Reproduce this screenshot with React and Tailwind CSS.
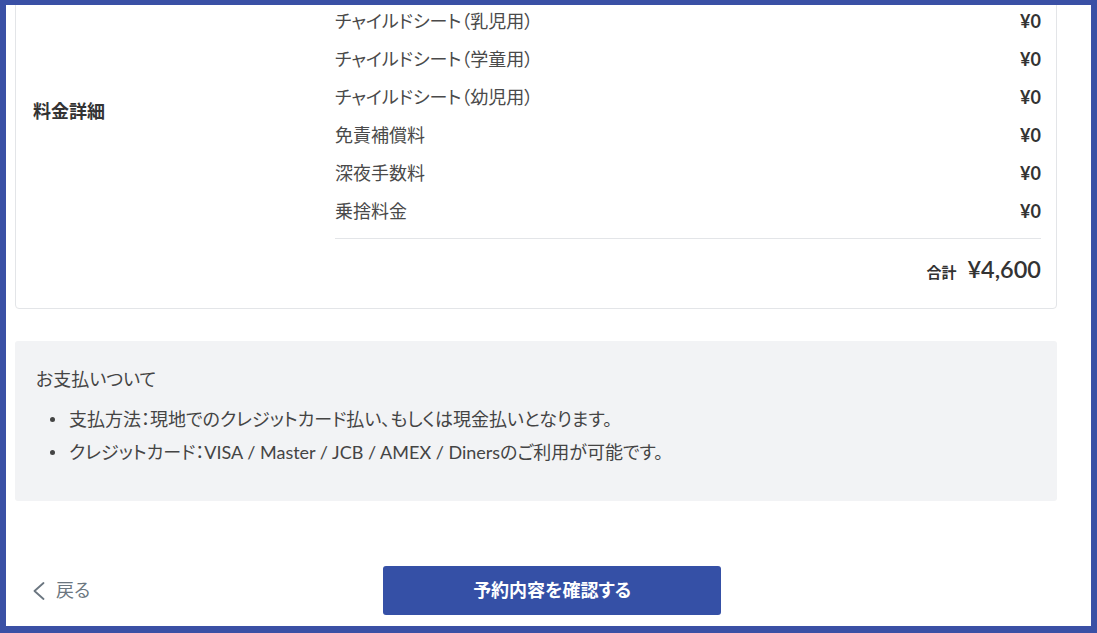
const fees = [
  'チャイルドシート（乳児用）',
  'チャイルドシート（学童用）',
  'チャイルドシート（幼児用）',
  '免責補償料',
  '深夜手数料',
  '乗捨料金',
];

const notes = [
  '支払方法：現地でのクレジットカード払い、もしくは現金払いとなります。',
  'クレジットカード：VISA / Master / JCB / AMEX / Dinersのご利用が可能です。',
];

export default function App() {
  return (
    <div className="w-[1097px] h-[633px] bg-[#3a50a5] pt-[5px] pl-[6px] pr-[6px] pb-[7px] font-['Lato','Noto_Sans_CJK_JP',sans-serif] [font-feature-settings:'palt']">
      <div className="h-full bg-white overflow-hidden">
        {/* fee card */}
        <div className="-mt-[4px] ml-[9px] w-[1042px] border border-[#e3e5e8] rounded-[4px] flex pl-[17px] pr-[15px]">
          <div className="w-[302px] shrink-0 pt-[97px] text-[18px] leading-[24px] font-bold text-[#333]">料金詳細</div>
          <div className="flex-1">
            {fees.map((f) => (
              <div key={f} className="h-[38px] flex items-center justify-between text-[18px] text-[#4a4a4a]">
                <span>{f}</span>
                <span className="font-bold text-[#333]">¥0</span>
              </div>
            ))}
            <div className="mt-[8px] border-t border-[#e3e5e8]" />
            <div className="pt-[16px] pb-[22px] flex items-baseline justify-end gap-[11px] leading-[28px] text-[#333]">
              <span className="text-[15px] font-bold">合計</span>
              <span className="text-[23.5px] font-semibold">¥4,600</span>
            </div>
          </div>
        </div>

        {/* payment note */}
        <div className="mt-[32px] ml-[9px] w-[1042px] h-[160px] bg-[#f2f3f5] rounded-[3px] pl-[21px] pt-[26px] text-[#444]">
          <p className="text-[18px] leading-[24px]">お支払いついて</p>
          <ul className="mt-[12px]">
            {notes.map((n) => (
              <li key={n} className="flex items-center leading-[33px] text-[18px]">
                <span className="w-[5px] h-[5px] rounded-full bg-[#444] ml-[14px] mr-[14px]" />
                {n}
              </li>
            ))}
          </ul>
        </div>

        {/* actions */}
        <div className="mt-[65px] flex items-center pl-[27px]">
          <a className="flex items-center gap-[11px] text-[18px] text-[#6b7680] cursor-pointer">
            <svg width="12" height="18" viewBox="0 0 12 18" fill="none" stroke="currentColor" strokeWidth="1.8" strokeLinecap="round" strokeLinejoin="round">
              <polyline points="10.5,1 1.5,9 10.5,17" />
            </svg>
            <span>戻る</span>
          </a>
          <button className="ml-[293px] w-[338px] h-[49px] rounded-[3px] bg-[#3550a6] text-white text-[18px] font-bold">
            予約内容を確認する
          </button>
        </div>
      </div>
    </div>
  );
}
